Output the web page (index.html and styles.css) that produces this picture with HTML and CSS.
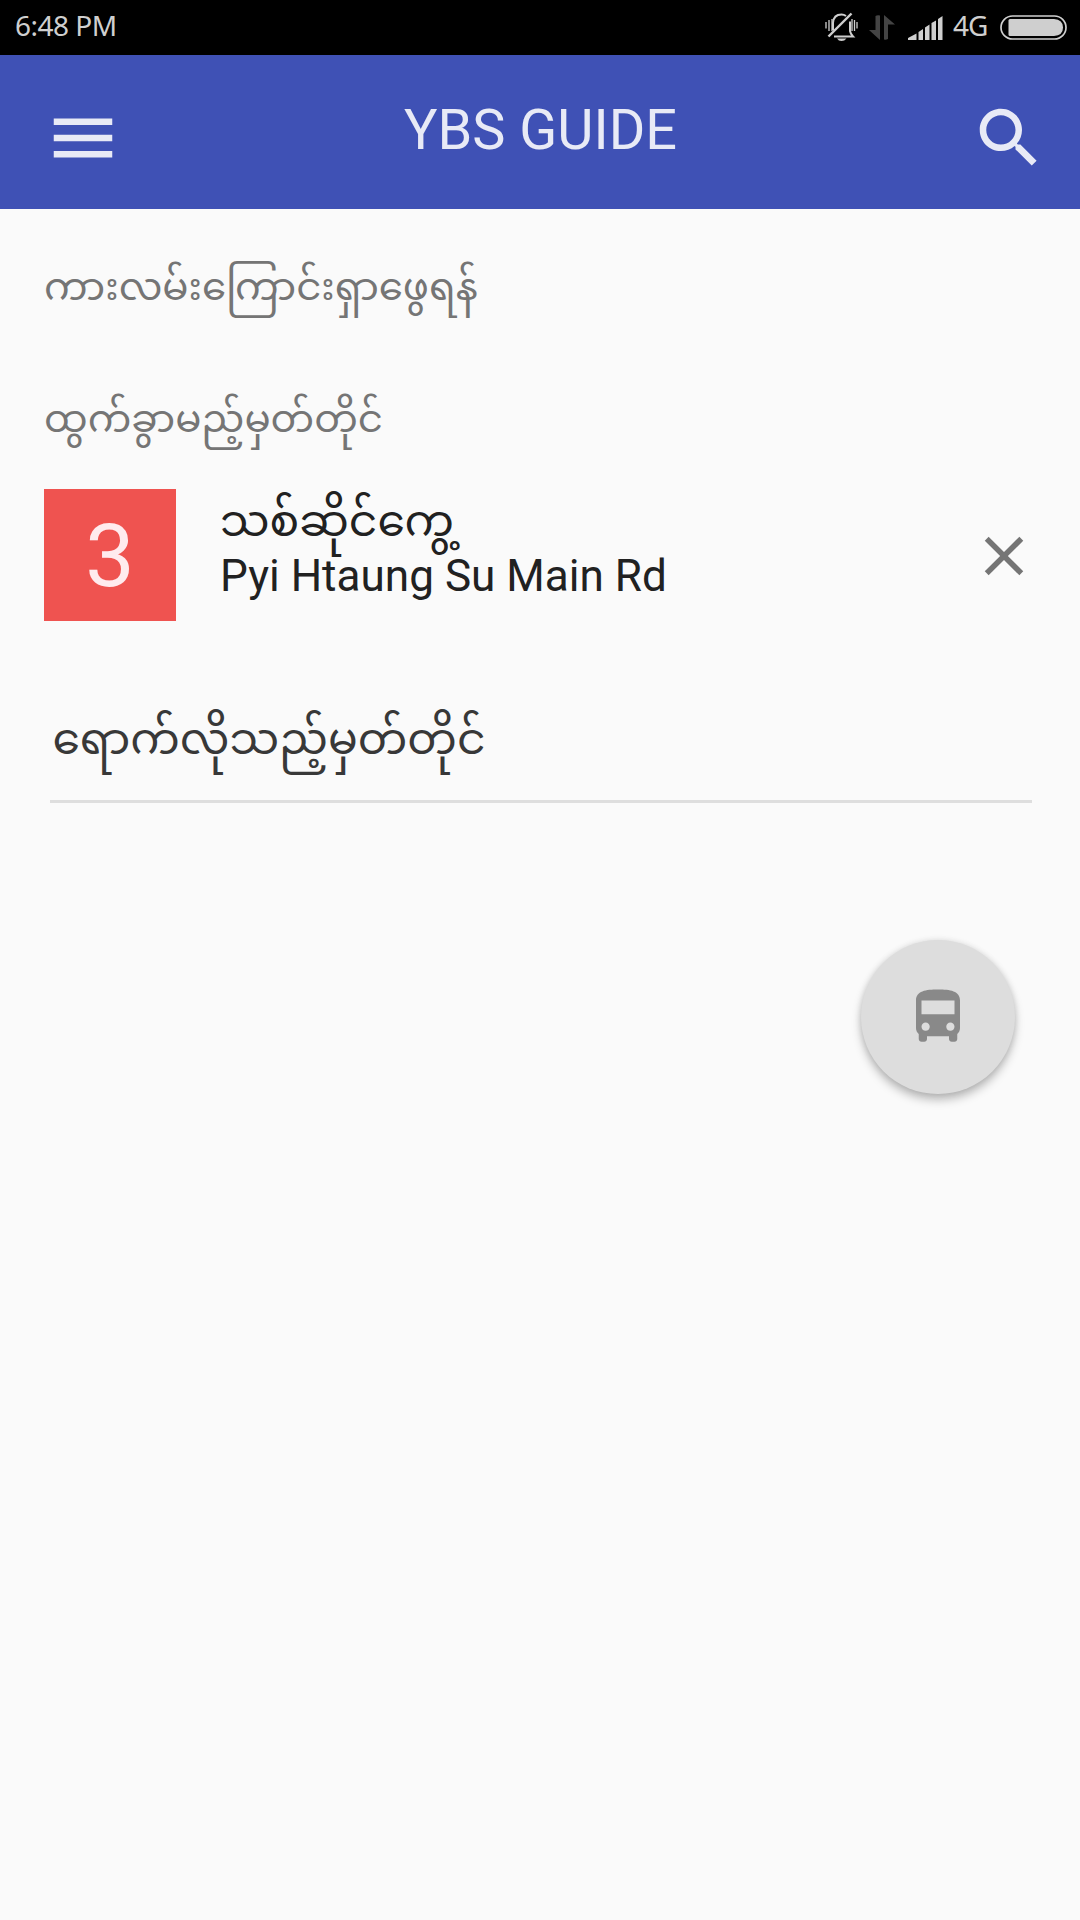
FILE: index.html
```html
<!DOCTYPE html>
<html lang="my">
<head>
<meta charset="utf-8">
<title>YBS GUIDE</title>
<link rel="stylesheet" href="styles.css">
</head>
<body>
<div class="status">
  <span class="clock">6:48 PM</span>
  <div class="indicators">
    <svg class="bell" width="34" height="30" viewBox="0 0 34 30" fill="none" stroke="#cfcfcf" stroke-width="2">
      <path d="M8 18V11Q8.500 2.500 16.500 2.500Q19 2.500 21 4M25 9.500V19Q25.500 22 28 24.500H9"/>
      <path d="M3.500 24.500L26.500 1.500" stroke-width="2.400"/>
      <path d="M12 26.500H21.500Q19.500 29 16.500 29T12 26.500Z" fill="#cfcfcf" stroke="none"/>
      <path d="M1 10V16.500M4 8V19M7 7V19M27 7V19M29.500 8V19M32 10V16.500" stroke-width="1.300"/>
    </svg>
    <svg class="data" width="26" height="25" viewBox="0 0 26 25" fill="#444"><path d="M6.500 1Q8 0 11 .500V25L0 15H6.500ZM15 0L26 9.500H19V24Q17 25 15 24.500Z"/></svg>
    <svg class="signal" width="35" height="24" viewBox="0 0 35 24" fill="#cfcfcf"><path d="M0 24V22L8.500 17.500V24ZM10.500 24V16L15 13V24ZM17 24V11.500L21.500 8.500V24ZM23.500 24V7L28 4.500V24ZM30 24V3L34.500 0V24Z"/></svg>
    <span class="net">4G</span>
    <svg class="battery" width="67" height="25" viewBox="0 0 67 25"><rect x="1" y="1" width="65" height="23" rx="11.500" fill="none" stroke="#cfcfcf" stroke-width="1.700"/><path d="M10 4H54Q63 4.500 63 12.500T54 21H10Q8.500 21 8.500 19.500V5.500Q8.500 4 10 4Z" fill="#cfcfcf"/></svg>
  </div>
</div>
<header class="appbar">
  <svg class="icon" viewBox="0 0 24 24"><path d="M3 18h18v-2H3v2zm0-5h18v-2H3v2zm0-7v2h18V6H3z"/></svg>
  <h1 class="title">YBS GUIDE</h1>
  <svg class="icon" viewBox="0 0 24 24"><path d="M15.500 14h-.79l-.28-.27C15.410 12.590 16 11.110 16 9.500 16 5.910 13.090 3 9.500 3S3 5.910 3 9.500 5.910 16 9.500 16c1.610 0 3.090-.59 4.230-1.570l.27.28v.79l5 4.990L20.490 19l-4.990-5zm-6 0C7.010 14 5 11.990 5 9.500S7.010 5 9.500 5 14 7.010 14 9.500 11.990 14 9.500 14z"/></svg>
</header>
<main class="content">
  <p class="label">ကားလမ်းကြောင်းရှာဖွေရန်</p>
  <p class="label">ထွက်ခွာမည့်မှတ်တိုင်</p>
  <section class="stop">
    <div class="badge">3</div>
    <div class="info">
      <div class="name">သစ်ဆိုင်ကွေ့</div>
      <div class="road">Pyi Htaung Su Main Rd</div>
    </div>
    <svg class="close" viewBox="0 0 24 24"><path d="M19 6.410L17.590 5 12 10.590 6.410 5 5 6.410 10.590 12 5 17.590 6.410 19 12 13.410 17.590 19 19 17.590 13.410 12z"/></svg>
  </section>
  <div class="field">ရောက်လိုသည့်မှတ်တိုင်</div>
  <div class="fab">
    <svg class="bus" viewBox="0 0 24 24"><path d="M4 16c0 .88.39 1.670 1 2.220V20c0 .55.45 1 1 1h1c.55 0 1-.45 1-1v-1h8v1c0 .55.45 1 1 1h1c.55 0 1-.45 1-1v-1.780c.61-.55 1-1.340 1-2.220V6c0-3.500-3.580-4-8-4s-8 .5-8 4v10zm3.500 1c-.83 0-1.500-.67-1.500-1.500S6.670 14 7.500 14s1.500.67 1.500 1.500S8.330 17 7.500 17zm9 0c-.83 0-1.500-.67-1.500-1.500s.67-1.500 1.500-1.500 1.500.67 1.500 1.500-.67 1.500-1.500 1.500zm1.500-6H6V6h12v5z"/></svg>
  </div>
</main>
</body>
</html>
```
FILE: styles.css
```css
* { box-sizing: border-box; }
body {
  margin: 0;
  width: 1080px;
  height: 1920px;
  background: #fafafa;
  color: #212121;
  font-family: Roboto, "Noto Sans Myanmar", "Noto Sans", sans-serif;
}
svg { display: block; flex: none; }
.status {
  display: flex;
  justify-content: space-between;
  height: 55px;
  padding: 0 13px 0 15px;
  background: #000;
  color: #cfcfcf;
  font: 28px/50px "Noto Sans", sans-serif;
}
.clock { letter-spacing: -0.5px; }
.indicators { display: flex; align-items: flex-start; }
.bell { margin: 12px 10px 0 0; }
.data { margin: 15px 13px 0 0; }
.signal { margin: 16px 10px 0 0; }
.net { width: 47px; letter-spacing: -1px; }
.battery { margin-top: 15px; }
.appbar {
  display: flex;
  justify-content: space-between;
  height: 154px;
  padding: 43.5px 32px 0 44px;
  background: #3f51b5;
}
.icon { width: 78px; height: 78px; fill: #e8eaf6; }
.title {
  margin: 0 11px 0 0;
  font-size: 55.8px;
  font-weight: 400;
  line-height: 62px;
  color: #e8eaf6;
}
.content { padding: 0 44px; }
.label {
  height: 132px;
  margin: 0;
  font-size: 38.8px;
  line-height: 155px;
  white-space: nowrap;
  color: #757575;
}
.stop { display: flex; height: 132px; margin-top: 16.3px; }
.badge {
  width: 132px;
  height: 132px;
  background: #ef5350;
  color: #ffebee;
  font-size: 88px;
  line-height: 134px;
  text-align: center;
}
.info { flex: 1; padding-left: 44px; }
.name { height: 60px; font-size: 44px; line-height: 64px; }
.road { font-size: 44.1px; line-height: 54px; }
.close { width: 66px; height: 66px; margin: 33.5px -1px 0 0; fill: #757575; }
.field {
  width: 982px;
  height: 182px;
  margin-left: 5.5px;
  padding-left: 3px;
  border-bottom: 3px solid #dedede;
  font-size: 44.1px;
  line-height: 236px;
  white-space: nowrap;
  color: #383838;
}
.fab {
  display: flex;
  align-items: center;
  justify-content: center;
  width: 154px;
  height: 154px;
  margin: 137.2px 21.5px 0 auto;
  border-radius: 50%;
  background: #ddd;
  box-shadow: 0 6px 10px rgba(0, 0, 0, .25), 0 0 6px rgba(0, 0, 0, .1);
}
.bus { width: 66px; height: 66px; fill: #898989; }
```
